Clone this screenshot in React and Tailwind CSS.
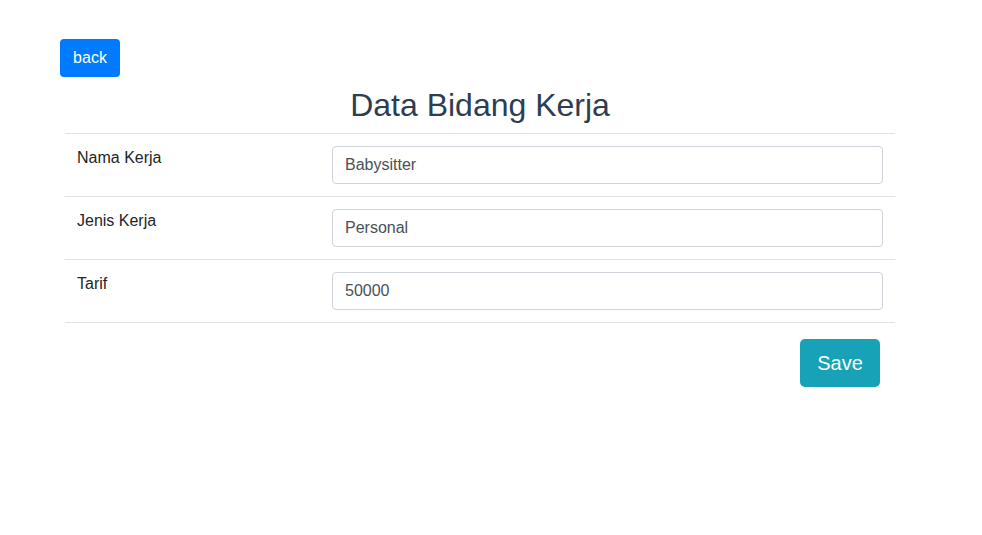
import React from 'react';

const rows = [
  { label: 'Nama Kerja', value: 'Babysitter' },
  { label: 'Jenis Kerja', value: 'Personal' },
  { label: 'Tarif', value: '50000' },
];

const App = () => {
  return (
    <div className="min-h-screen bg-white font-['Liberation_Sans',Arial,sans-serif] text-[#212529]">
      <div className="pl-[60px] pt-[39px]">
        <button
          type="button"
          className="w-[60px] h-[38px] bg-[#007bff] text-white text-base leading-6 rounded-[4px]"
        >
          back
        </button>
      </div>
      <div className="w-[830px] ml-[65px]">
        <h1 className="mt-[9px] h-[38px] text-[32px] leading-[38px] text-center text-[#2c3e50] font-normal">
          Data Bidang Kerja
        </h1>
        <div className="mt-[9px] border-b border-[#dee2e6]">
          {rows.map((row) => (
            <div key={row.label} className="flex border-t border-[#dee2e6]">
              <div className="w-[255px] p-3 text-base leading-6">{row.label}</div>
              <div className="flex-1 p-3">
                <input
                  type="text"
                  defaultValue={row.value}
                  className="w-full h-[38px] px-3 border border-[#ced4da] rounded-[4px] text-base text-[#495057] outline-none"
                />
              </div>
            </div>
          ))}
        </div>
        <div className="flex justify-end pr-[15px] pt-4">
          <button
            type="button"
            className="w-[80px] h-[48px] bg-[#17a2b8] text-white text-xl rounded-[5px]"
          >
            Save
          </button>
        </div>
      </div>
    </div>
  );
};

export default App;
